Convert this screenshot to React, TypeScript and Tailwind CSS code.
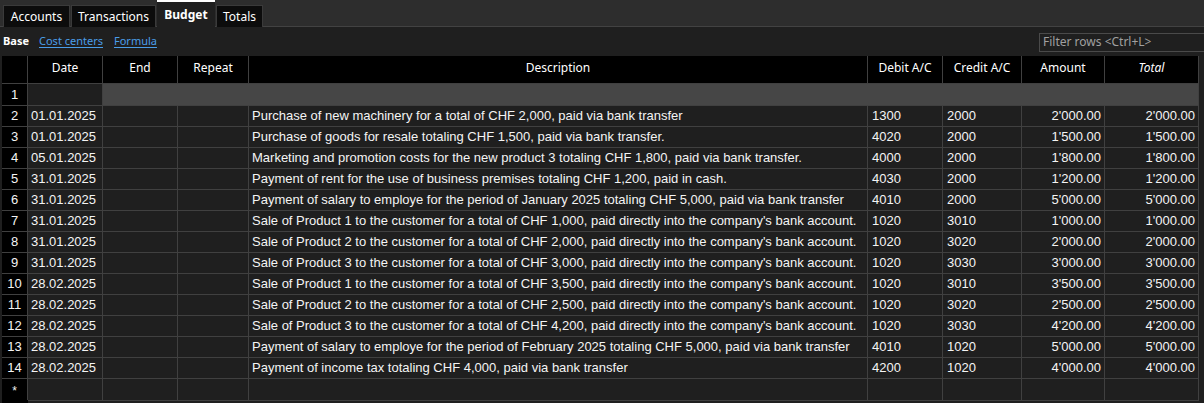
import React from "react";

const rows: [string, string, string, string, string, string][] = [
  ["01.01.2025", "Purchase of new machinery for a total of CHF 2,000, paid via bank transfer", "1300", "2000", "2'000.00", "2'000.00"],
  ["01.01.2025", "Purchase of goods for resale totaling CHF 1,500, paid via bank transfer.", "4020", "2000", "1'500.00", "1'500.00"],
  ["05.01.2025", "Marketing and promotion costs for the new product 3 totaling CHF 1,800, paid via bank transfer.", "4000", "2000", "1'800.00", "1'800.00"],
  ["31.01.2025", "Payment of rent for the use of business premises totaling CHF 1,200, paid in cash.", "4030", "2000", "1'200.00", "1'200.00"],
  ["31.01.2025", "Payment of salary to employe for the period of January 2025 totaling CHF 5,000, paid via bank transfer", "4010", "2000", "5'000.00", "5'000.00"],
  ["31.01.2025", "Sale of Product 1 to the customer for a total of CHF 1,000, paid directly into the company's bank account.", "1020", "3010", "1'000.00", "1'000.00"],
  ["31.01.2025", "Sale of Product 2 to the customer for a total of CHF 2,000, paid directly into the company's bank account.", "1020", "3020", "2'000.00", "2'000.00"],
  ["31.01.2025", "Sale of Product 3 to the customer for a total of CHF 3,000, paid directly into the company's bank account.", "1020", "3030", "3'000.00", "3'000.00"],
  ["28.02.2025", "Sale of Product 1 to the customer for a total of CHF 3,500, paid directly into the company's bank account.", "1020", "3010", "3'500.00", "3'500.00"],
  ["28.02.2025", "Sale of Product 2 to the customer for a total of CHF 2,500, paid directly into the company's bank account.", "1020", "3020", "2'500.00", "2'500.00"],
  ["28.02.2025", "Sale of Product 3 to the customer for a total of CHF 4,200, paid directly into the company's bank account.", "1020", "3030", "4'200.00", "4'200.00"],
  ["28.02.2025", "Payment of salary to employe for the period of February 2025 totaling CHF 5,000, paid via bank transfer", "4010", "1020", "5'000.00", "5'000.00"],
  ["28.02.2025", "Payment of income tax totaling CHF 4,000, paid via bank transfer", "4200", "1020", "4'000.00", "4'000.00"],
];

const GRID = "grid grid-cols-[26px_75px_75px_71px_619px_75px_79px_83px_94px]";
const CELL = "border-r border-b border-[#404040] bg-[#1f1f1f] px-[3px] whitespace-nowrap overflow-hidden flex items-center";
const NUM = "border-r border-b border-[#404040] bg-black flex items-center justify-center";
const HEAD = "border-r border-b border-[#404040] bg-black flex justify-center pt-[3px] leading-[18px] whitespace-nowrap";

export default function App() {
  return (
    <div className="w-[1204px] h-[403px] overflow-hidden bg-[#1f1f1f] text-white font-['Noto_Sans',sans-serif] text-[12px]">
      {/* Tab bar */}
      <div className="h-[27px] bg-[#2d2d2d] border-b border-[#424242] flex items-end pl-[3px] gap-[1px]">
        <div className="w-[67px] h-[22px] mb-[-1px] bg-[#0c0c0c] border border-b-0 border-[#3a3a3a] flex items-center justify-center text-[12px] leading-none">Accounts</div>
        <div className="w-[85px] h-[22px] mb-[-1px] bg-[#0c0c0c] border border-b-0 border-[#3a3a3a] flex items-center justify-center text-[12px] leading-none">Transactions</div>
        <div className="w-[58px] h-[27px] mb-[-1px] bg-[#1f1f1f] border-t-2 border-white flex items-center justify-center text-[12px] font-bold leading-none">Budget</div>
        <div className="w-[47px] h-[22px] mb-[-1px] bg-[#0c0c0c] border border-b-0 border-[#3a3a3a] flex items-center justify-center text-[12px] leading-none">Totals</div>
      </div>
      {/* Sub bar */}
      <div className="h-[29px] flex items-center pl-[3px] text-[11px]">
        <span className="font-bold">Base</span>
        <span className="ml-[10px] text-[#4a9de8] underline underline-offset-2">Cost centers</span>
        <span className="ml-[11px] text-[#4a9de8] underline underline-offset-2">Formula</span>
        <div className="ml-auto mr-[-4px] w-[169px] h-[19px] mt-[1px] border border-[#4a4a4a] bg-[#1f1f1f] flex items-center pl-[3px] text-[#a0a0a0] text-[12px] leading-none">
          Filter rows &lt;Ctrl+L&gt;
        </div>
      </div>
      {/* Table */}
      <div className="ml-[2px] font-['Liberation_Sans',Arial,sans-serif] text-[13px] text-[#f4f4f4]">
        <div className={`${GRID} h-[28px] font-['Noto_Sans',sans-serif] text-[12px] text-white`}>
          <div className={HEAD}></div>
          <div className={HEAD}>Date</div>
          <div className={HEAD}>End</div>
          <div className={HEAD}>Repeat</div>
          <div className={HEAD}>Description</div>
          <div className={HEAD}>Debit A/C</div>
          <div className={HEAD}>Credit A/C</div>
          <div className={HEAD}>Amount</div>
          <div className={`${HEAD} italic`}>Total</div>
        </div>
        <div className={`${GRID} h-[22px]`}>
          <div className={NUM}>1</div>
          <div className={CELL}></div>
          <div className="col-span-7 bg-[#464646] border-r border-b border-[#404040]"></div>
        </div>
        {rows.map((r, i) => (
          <div key={i} className={`${GRID} h-[21px]`}>
            <div className={NUM}>{i + 2}</div>
            <div className={CELL}>{r[0]}</div>
            <div className={CELL}></div>
            <div className={CELL}></div>
            <div className={CELL}>{r[1]}</div>
            <div className={`${CELL} pl-[4px]`}>{r[2]}</div>
            <div className={`${CELL} pl-[4px]`}>{r[3]}</div>
            <div className={`${CELL} justify-end pr-[3px]`}>{r[4]}</div>
            <div className={`${CELL} justify-end pr-[3px]`}>{r[5]}</div>
          </div>
        ))}
        <div className={`${GRID} h-[21px]`}>
          <div className={`${NUM} items-start pt-[3px] text-[12px]`}>*</div>
          <div className={CELL}></div>
          <div className={CELL}></div>
          <div className={CELL}></div>
          <div className={CELL}></div>
          <div className={CELL}></div>
          <div className={CELL}></div>
          <div className={CELL}></div>
          <div className={CELL}></div>
        </div>
        <div className={`${GRID} h-[4px]`}>
          <div className="bg-black"></div>
        </div>
      </div>
    </div>
  );
}
